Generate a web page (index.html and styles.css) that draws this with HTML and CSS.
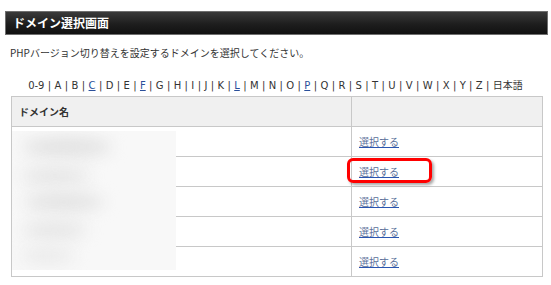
FILE: index.html
```html
<!DOCTYPE html>
<html lang="ja">
<head>
<meta charset="utf-8">
<link rel="stylesheet" href="styles.css">
</head>
<body>
<div class="page">
  <h1 class="title">ドメイン選択画面</h1>
  <p class="desc">PHPバージョン切り替えを設定するドメインを選択してください。</p>
  <p class="alpha">0-9 | A | B | <a href="#">C</a> | D | E | <a href="#">F</a> | G | H | I | J | K | <a href="#">L</a> | M | N | O | <a href="#">P</a> | Q | R | S | T | U | V | W | X | Y | Z | 日本語</p>
  <div class="tablewrap">
    <table class="domains">
      <thead>
        <tr><th class="c1">ドメイン名</th><th class="c2"></th></tr>
      </thead>
      <tbody>
        <tr><td class="c1"></td><td class="c2"><a href="#">選択する</a></td></tr>
        <tr><td class="c1"></td><td class="c2"><a href="#">選択する</a></td></tr>
        <tr><td class="c1"></td><td class="c2"><a href="#">選択する</a></td></tr>
        <tr><td class="c1"></td><td class="c2"><a href="#">選択する</a></td></tr>
        <tr><td class="c1"></td><td class="c2"><a href="#">選択する</a></td></tr>
      </tbody>
    </table>
    <div class="blur">
      <span class="blob b1"></span>
      <span class="blob b2"></span>
      <span class="blob b3"></span>
      <span class="blob b4"></span>
      <span class="blob b5"></span>
    </div>
    <div class="highlight"></div>
  </div>
</div>
</body>
</html>
```
FILE: styles.css
```css
html, body {
  margin: 0;
  padding: 0;
  background: #fff;
}
body {
  font-family: "DejaVu Sans", "Noto Sans CJK JP", sans-serif;
  font-size: 10px;
  color: #333;
}
.page {
  padding: 11px 3px 0 5px;
}
.title {
  margin: 0;
  height: 24px;
  box-sizing: border-box;
  border: 1px solid #6f6f6f;
  background: linear-gradient(#3a3a3a, #1e1e1e 55%, #111);
  color: #fff;
  font-family: "Noto Sans CJK JP", sans-serif;
  font-size: 12px;
  font-weight: 700;
  line-height: 22px;
  padding-left: 7px;
}
.desc {
  margin: 11px 0 0 5px;
  line-height: 14px;
  font-family: "Noto Sans CJK JP", sans-serif;
  font-size: 10px;
}
.alpha {
  margin: 19px 0 0 0;
  width: 541px;
  text-align: center;
  line-height: 14px;
  font-family: "DejaVu Sans", "Noto Sans CJK JP", sans-serif;
  font-size: 10px;
  white-space: nowrap;
  word-spacing: 0.2px;
}
.alpha a {
  color: #2a4f9a;
}
.tablewrap {
  position: relative;
  margin: 3px 0 0 6px;
  width: 532px;
}
.domains {
  width: 532px;
  border-collapse: collapse;
  table-layout: fixed;
}
.domains th, .domains td {
  border: 1px solid #c8c8c8;
  height: 30px;
  box-sizing: border-box;
  padding: 0 0 0 7px;
  text-align: left;
  font-family: "Noto Sans CJK JP", sans-serif;
  font-size: 10px;
}
.domains th {
  background: #f0f0f0;
  font-weight: 700;
  color: #333;
}
.domains .c1 {
  width: 340px;
}
.domains td a {
  color: #5a6f9a;
  text-decoration-color: #2a55b0;
}
.blur {
  position: absolute;
  left: 1px;
  top: 35px;
  width: 164px;
  height: 139px;
  background: #f8f8f8;
  overflow: hidden;
}
.blob {
  position: absolute;
  background: #e2e2e2;
  border-radius: 50%;
  filter: blur(8px);
}
.b1 { left: 10px; top: 6px; width: 90px; height: 20px; }
.b2 { left: 8px; top: 36px; width: 70px; height: 18px; background: #e6e6e6; }
.b3 { left: 12px; top: 62px; width: 80px; height: 18px; }
.b4 { left: 10px; top: 90px; width: 65px; height: 18px; background: #e6e6e6; }
.b5 { left: 8px; top: 116px; width: 55px; height: 18px; background: #ebebeb; }
.highlight {
  position: absolute;
  left: 336px;
  top: 62px;
  width: 85px;
  height: 25px;
  box-sizing: border-box;
  border: 3px solid #f00;
  border-radius: 6px;
  box-shadow: 2px 2px 3px rgba(0,0,0,0.35);
}
```
